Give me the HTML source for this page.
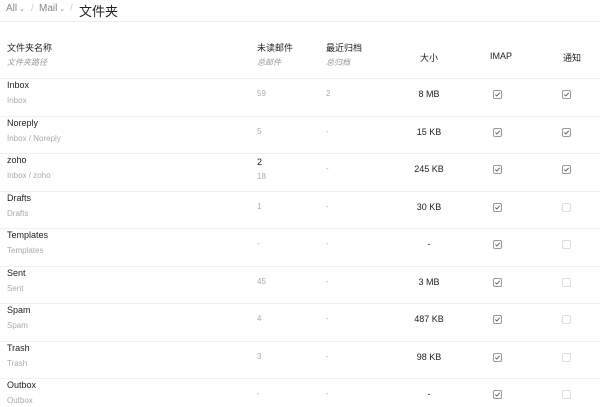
<!DOCTYPE html>
<html><head><meta charset="utf-8"><style>
*{margin:0;padding:0;box-sizing:border-box}
body{width:600px;height:407px;overflow:hidden;background:#fff;font-family:"Liberation Sans","Noto Sans CJK SC",sans-serif;color:#333;position:relative}
.a{position:absolute;white-space:nowrap}
.hdr{position:absolute;left:0;top:0;width:600px;height:22px;border-bottom:1px solid #ececec}
.t{font-size:9px;color:#222}
.s{font-size:8px;color:#999}
.g{font-size:8px;color:#aaa}
.line{position:absolute;left:0;width:600px;height:1px;background:#f0f0f0}
.cb{position:absolute;width:9px;height:9px;border:1px solid #999;border-radius:2px}
.cb.e{border-color:#ddd}
.cb svg{position:absolute;left:0;top:0}
.sz{position:absolute;width:80px;text-align:center;font-size:9px;color:#222}
</style></head><body>
<div class="hdr"></div>
<div class="a" style="left:6px;top:3px;font-size:10px;color:#888">All<span style="font-size:7px"> ⌄</span></div>
<div class="a" style="left:31px;top:3px;font-size:10px;color:#ccc">/</div>
<div class="a" style="left:39px;top:3px;font-size:10px;color:#888">Mail<span style="font-size:7px"> ⌄</span></div>
<div class="a" style="left:70px;top:3px;font-size:10px;color:#ccc">/</div>
<div class="a" style="left:79px;top:1px;font-size:13px;color:#222">文件夹</div>

<div class="a t" style="left:7px;top:41px">文件夹名称</div>
<div class="a s" style="left:7px;top:57px;font-style:italic">文件夹路径</div>
<div class="a t" style="left:257px;top:41px">未读邮件</div>
<div class="a s" style="left:257px;top:57px;font-style:italic">总邮件</div>
<div class="a t" style="left:326px;top:41px">最近归档</div>
<div class="a s" style="left:326px;top:57px;font-style:italic">总归档</div>
<div class="sz" style="left:389px;top:51px">大小</div>
<div class="a t" style="left:490px;top:51px">IMAP</div>
<div class="a t" style="left:563px;top:51px">通知</div>

<div id="rows"></div>
<script>
var R=[["Inbox","Inbox","59","","2","8 MB",1,1],
["Noreply","Inbox / Noreply","5","","-","15 KB",1,1],
["zoho","Inbox / zoho","18","2","-","245 KB",1,1],
["Drafts","Drafts","1","","-","30 KB",1,0],
["Templates","Templates","-","","-","-",1,0],
["Sent","Sent","45","","-","3 MB",1,0],
["Spam","Spam","4","","-","487 KB",1,0],
["Trash","Trash","3","","-","98 KB",1,0],
["Outbox","Outbox","-","","-","-",1,0]];
var h="",chk='<svg width="7" height="7" viewBox="0 0 7 7"><path d="M1.3 3.6 L2.8 5 L5.7 1.8" fill="none" stroke="#555" stroke-width="0.9"/></svg>';
R.forEach(function(r,i){var y=78+37.5*i;
h+='<div class="line" style="top:'+y+'px"></div>';
h+='<div class="a t" style="left:7px;top:'+(y+2)+'px">'+r[0]+'</div>';
h+='<div class="a g" style="left:7px;top:'+(y+18)+'px">'+r[1]+'</div>';
if(r[3]){h+='<div class="a t" style="left:257px;top:'+(y+4)+'px">'+r[3]+'</div><div class="a g" style="left:257px;top:'+(y+19)+'px">'+r[2]+'</div>';}
else h+='<div class="a g" style="left:257px;top:'+(y+11)+'px">'+r[2]+'</div>';
h+='<div class="a g" style="left:326px;top:'+(y+11)+'px">'+r[4]+'</div>';
h+='<div class="sz" style="left:389px;top:'+(y+11)+'px">'+r[5]+'</div>';
h+='<div class="cb" style="left:493px;top:'+(y+12)+'px">'+chk+'</div>';
h+='<div class="cb'+(r[7]?'':' e')+'" style="left:562px;top:'+(y+12)+'px">'+(r[7]?chk:'')+'</div>';
});
document.getElementById("rows").innerHTML=h;
</script>
</body></html>
